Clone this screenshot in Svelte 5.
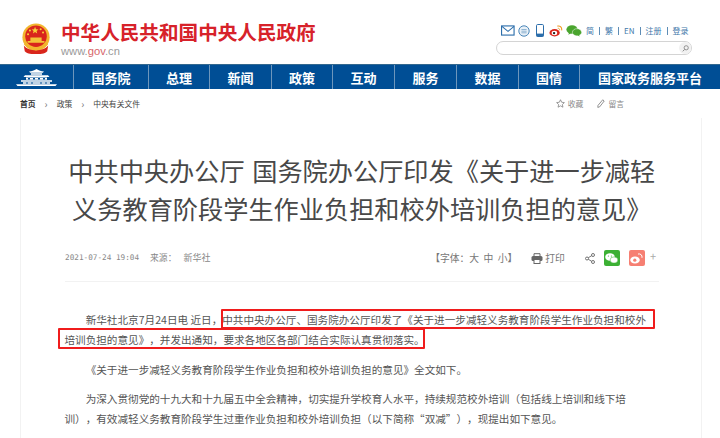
<script>
  const nav = [
    { t: '国务院', w: 75 }, { t: '总理', w: 61 }, { t: '新闻', w: 62 }, { t: '政策', w: 61 },
    { t: '互动', w: 62 }, { t: '服务', w: 62 }, { t: '数据', w: 62 }, { t: '国情', w: 61 },
    { t: '国家政务服务平台', w: 140 }
  ];
</script>

<div class="page">
  <header class="top">
    <svg class="emblem" viewBox="0 0 32 34" width="30" height="32">
      <circle cx="16" cy="15" r="14.5" fill="#f2b62e"/>
      <circle cx="16" cy="14" r="11.5" fill="#d9261c"/>
      <path d="M15 4l1 2.6 2.6.2-2 1.6.7 2.6L15 9.6l-2.3 1.4.7-2.6-2-1.6 2.6-.2z" fill="#f7d038"/>
      <circle cx="9.5" cy="8" r="1.1" fill="#f7d038"/><circle cx="21" cy="6.5" r="1.1" fill="#f7d038"/><circle cx="23.5" cy="10" r="1.1" fill="#f7d038"/><circle cx="7.5" cy="12" r="1.1" fill="#f7d038"/>
      <path d="M7 19h18v2H7zM10 15.5h12v3.5H10z" fill="#f4c338"/>
      <path d="M3 24c4 5 8 4 13 5 5-1 9 0 13-5l-1 6c-3 3-8 3-12 3s-9 0-12-3z" fill="#d9261c"/>
      <path d="M4 22c3 4 8 6 12 6s9-2 12-6" fill="none" stroke="#f2b62e" stroke-width="2.4"/>
    </svg>
    <div class="brand">
      <div class="site">中华人民共和国中央人民政府</div>
      <div class="url">www.<span>gov</span>.cn</div>
    </div>
    <div class="tools">
      <div class="links">
        <svg width="14" height="11" viewBox="0 0 15 11"><rect x=".6" y=".6" width="13.4" height="9.8" fill="none" stroke="#2c6eab" stroke-width="1.2"/><path d="M1 1l6.5 5.5L14 1" fill="none" stroke="#2c6eab" stroke-width="1.1"/></svg>
        <svg class="i2" width="12" height="12" viewBox="0 0 12 12"><circle cx="6" cy="6" r="5.2" fill="#e8f0f7" stroke="#4a86b8" stroke-width="1"/><path d="M3.4 4.5h5.2M3.4 6.2h5.2M3.4 7.8h5.2" stroke="#7aa6c9" stroke-width=".8"/></svg>
        <svg class="i3" width="8" height="13" viewBox="0 0 8 13"><rect x=".5" y=".5" width="7" height="12" rx="1.2" fill="#fff" stroke="#2c6eab"/><rect x=".5" y="9.6" width="7" height="2.9" fill="#2c6eab"/></svg>
        <svg class="i4" width="14" height="12" viewBox="0 0 15 13"><ellipse cx="6" cy="8.4" rx="5.6" ry="4" fill="#d9261c"/><ellipse cx="5.8" cy="8.6" rx="3" ry="2.4" fill="#fff"/><circle cx="5.4" cy="8.8" r="1.3" fill="#222"/><path d="M9 1.2c3-.8 5.2 1.4 4.6 4.6" fill="none" stroke="#ee9a22" stroke-width="1.2"/><path d="M9.4 3.6c1.4-.2 2.2.6 2 2" fill="none" stroke="#ee9a22" stroke-width="1"/></svg>
        <svg class="i5" width="16" height="12" viewBox="0 0 16 12"><ellipse cx="6" cy="4.5" rx="5.6" ry="4.3" fill="#4aa52e"/><path d="M3 7.5l-.6 2.2 2.6-1.4z" fill="#4aa52e"/><ellipse cx="11" cy="7.3" rx="4.6" ry="3.6" fill="#4aa52e" stroke="#fff" stroke-width=".5"/><path d="M13 10l.8 1.6L11.5 10.6z" fill="#4aa52e"/></svg>
        <span class="lang"><a>简</a><i></i><a>繁</a><i></i><a>EN</a><i></i><a>注册</a><i></i><a>登录</a></span>
      </div>
      <div class="search">
        <span class="sbtn"><svg width="7" height="7" viewBox="0 0 7 7"><circle cx="4.2" cy="2.8" r="2.1" fill="none" stroke="#888" stroke-width=".9"/><path d="M2.7 4.4L.8 6.3" stroke="#888" stroke-width="1"/></svg></span>
      </div>
    </div>
  </header>

  <nav class="nav">
    <div class="cell home">
      <svg width="41" height="17" viewBox="0 0 41 17"><path fill="#fff" d="M13 2.5C16 2.2 18 1.4 20.5 0 23 1.4 25 2.2 28 2.5l-1.2 1.2H14.2zM15 4.3h11v1.5H15zM9 6.3h23l1.5 1.6H7.500zM10 8.500h21v2.200H10zM5 11.300h31v1.500H5zM7 13.300h27v1.400H7zM0 15.200h41L39.500 17H1.500z"/><path fill="#004e95" d="M12 9h2v1.500h-2zM17 9h2v1.500h-2zM22 9h2v1.500h-2zM27 9h2v1.500h-2zM10 13.500h2v1h-2zM15 13.500h2v1h-2zM24 13.500h2v1h-2zM29 13.500h2v1h-2z"/></svg>
    </div>
    {#each nav as n}
      <a class="cell" style="width:{n.w}px">{n.t}</a>
    {/each}
  </nav>

  <div class="crumb">
    <b>首页</b><em>›</em><span>政策</span><em>›</em><span>中央有关文件</span>
    <div class="acts">
      <svg width="9" height="9" viewBox="0 0 10 10"><path d="M5 .8l1.3 2.800 3 .4-2.200 2.100.6 3L5 7.600 2.300 9.100l.6-3L.7 4l3-.4z" fill="none" stroke="#777" stroke-width=".8"/></svg>
      <span>收藏</span>
      <svg class="pen" width="8" height="9" viewBox="0 0 8 9"><path d="M5.700.8l1.500 1.200L2.700 7.800.8 8.400l.2-2z" fill="none" stroke="#777" stroke-width=".8"/></svg>
      <span>留言</span>
    </div>
  </div>

  <main class="card">
    <h1>中共中央办公厅 国务院办公厅印发《关于进一步减轻<br>义务教育阶段学生作业负担和校外培训负担的意见》</h1>
    <div class="meta">
      <span class="date">2021-07-24 19:04</span>
      <span class="src">来源：</span>
      <span class="agency">新华社</span>
      <div class="mtools">
        <span class="font">【字体：大&nbsp;&nbsp;中&nbsp;&nbsp;小】</span>
        <svg class="print" width="12" height="11" viewBox="0 0 12 11"><path d="M3 3V.7h6V3" fill="none" stroke="#666"/><rect x=".5" y="3" width="11" height="5" rx="1.500" fill="#666"/><rect x="3" y="6.500" width="6" height="4" fill="#fff" stroke="#666"/></svg>
        <span class="pt">打印</span>
        <svg class="share" width="10" height="11" viewBox="0 0 10 11"><circle cx="2" cy="5.500" r="1.500" fill="none" stroke="#666" stroke-width=".9"/><circle cx="8" cy="2" r="1.500" fill="none" stroke="#666" stroke-width=".9"/><circle cx="8" cy="9" r="1.500" fill="none" stroke="#666" stroke-width=".9"/><path d="M3.300 4.700l3.400-2M3.300 6.300l3.400 2" stroke="#666" stroke-width=".9"/></svg>
        <span class="tile wx"><svg width="13" height="11" viewBox="0 0 13 11"><ellipse cx="5" cy="4" rx="4.800" ry="3.800" fill="#fff"/><ellipse cx="9" cy="7" rx="3.900" ry="3.100" fill="#fff" stroke="#3cb034" stroke-width=".5"/><circle cx="3.400" cy="3" r=".6" fill="#3cb034"/><circle cx="6.400" cy="3" r=".6" fill="#3cb034"/></svg></span>
        <span class="tile wb"><svg width="13" height="11" viewBox="0 0 13 11"><ellipse cx="5" cy="7" rx="4.800" ry="3.500" fill="#fff"/><circle cx="4.800" cy="7.200" r="1.600" fill="#f67f72"/><path d="M8 1c2.500-.6 4.500 1.200 4 3.800" fill="none" stroke="#fff"/></svg></span>
        <span class="plus">+</span>
      </div>
    </div>

    <div class="body">
      <div class="lead">
        <p>新华社北京7月24日电 近日，中共中央办公厅、国务院办公厅印发了《关于进一步减轻义务教育阶段学生作业负担和校外培训负担的意见》，并发出通知，要求各地区各部门结合实际认真贯彻落实。</p>
        <div class="mark m1"></div>
        <div class="mark m2"></div>
      </div>
      <p class="second">《关于进一步减轻义务教育阶段学生作业负担和校外培训负担的意见》全文如下。</p>
      <p>为深入贯彻党的十九大和十九届五中全会精神，切实提升学校育人水平，持续规范校外培训（包括线上培训和线下培训），有效减轻义务教育阶段学生过重作业负担和校外培训负担（以下简称“双减”），现提出如下意见。</p>
    </div>
  </main>
</div>

<style>
  :global(body) { margin: 0; background: #fff; }
  .page {
    width: 720px; height: 438px; overflow: hidden;
    font-family: "Noto Sans CJK SC", sans-serif; color: #555;
  }
  .top { height: 64px; display: flex; box-sizing: border-box; padding: 23px 0 0 21px; }
  .emblem { margin-right: 10px; flex: none; }
  .site { margin-top: -3px; font-size: 19.6px; line-height: 24px; font-weight: 700; color: #d7222a; white-space: nowrap; }
  .url { font: 11.2px/12px "Liberation Sans", sans-serif; color: #9a9a9a; margin-top: 1px; }
  .url span { color: #d7666a; }
  .tools { margin-left: auto; width: 224px; margin-top: -1px; }
  .links { height: 17px; display: flex; align-items: center; padding-left: 5px; }
  .links svg { flex: none; }
  .i2 { margin-left: 3px; } .i3 { margin-left: 6px; } .i4 { margin-left: 5px; } .i5 { margin-left: 3px; }
  .lang { display: flex; align-items: center; font-size: 8px; color: #3f78aa; margin-left: 4px; }
  .lang i { width: 1px; height: 8px; background: #5e8db6; margin: 0 5px; }
  .search {
    width: 194px; height: 12px; margin-top: 2px;
    border: 1.5px solid #d4d4d4; border-radius: 8px; display: flex; justify-content: flex-end; align-items: center;
  }
  .sbtn { width: 12px; height: 12px; border-radius: 50%; background: #f1f1f1; display: flex; align-items: center; justify-content: center; }
  .nav { height: 25px; background: #004e95; border-top: 1px solid #33688f; box-sizing: border-box; display: flex; }
  .cell {
    height: 24px; box-sizing: border-box; border-right: 1px solid #6d96bc; display: flex; align-items: center; justify-content: center;
    color: #fff; font-size: 13px; font-weight: 700; flex: none;
  }
  .cell:last-child { border-right: 0; }
  .home { width: 74px; }
  .crumb { height: 29px; display: flex; align-items: center; padding-left: 20px; padding-right: 96px; font-size: 7.8px; color: #444; }
  .crumb em { font-style: normal; color: #777; margin: 0 9px; font-size: 10px; }
  .crumb b { color: #333; }
  .acts { margin-left: auto; display: flex; align-items: center; color: #888; }
  .acts span { margin-left: 3px; }
  .pen { margin-left: 14px; }
  .card {
    margin: 0 18px 0 20px; height: 330px; box-sizing: border-box;
    border-left: 1.5px solid #f2f2f2; border-right: 1.5px solid #f2f2f2; padding: 0 42.5px 0 44px;
  }
  h1 {
    margin: 0 -18px; padding-top: 33px; text-align: center; word-spacing: 2px;
    font-size: 25.2px; line-height: 38px; font-weight: 400; color: #484848; white-space: nowrap;
  }
  .meta { margin-top: 18px; height: 37px; box-sizing: border-box; padding-top: 6px; border-bottom: 1.5px solid #f2f2f2; display: flex; align-items: flex-start; font-size: 8.8px; color: #888; line-height: 14px; }
  .date { font-family: "DejaVu Sans Mono", monospace; font-size: 7.7px; }
  .src { margin-left: 11px; }
  .agency { margin-left: 7px; font-size: 9px; }
  .mtools { margin-left: auto; display: flex; align-items: center; height: 16px; margin-top: -1px; color: #777; font-size: 9.8px; margin-right: 2.5px; }
  .print { margin-left: 14px; }
  .pt { margin-left: 2px; }
  .share { margin-left: 20px; }
  .tile { width: 16px; height: 16px; border-radius: 2px; display: flex; align-items: center; justify-content: center; margin-left: 9px; }
  .wx { background: #3cb034; }
  .wb { background: #f67f72; }
  .plus { margin-left: 5px; margin-top: -5px; font-size: 11px; color: #aaa; }
  .body { margin-top: 28px; margin-left: -.5px; width: 587px; text-spacing-trim: space-all; }
  .body p { margin: 0 0 9px; font-size: 10.6px; line-height: 20px; text-indent: 2em; color: #555; }
  .lead { position: relative; margin-bottom: 10px; }
  .lead p { margin: 0; }
  .mark { position: absolute; border: 2px solid #f01c1c; box-sizing: border-box; border-radius: 1px; }
  .m1 { left: 156px; top: -1px; width: 434px; height: 20px; }
  .m2 { left: -7px; top: 18px; width: 367px; height: 21px; }
</style>
